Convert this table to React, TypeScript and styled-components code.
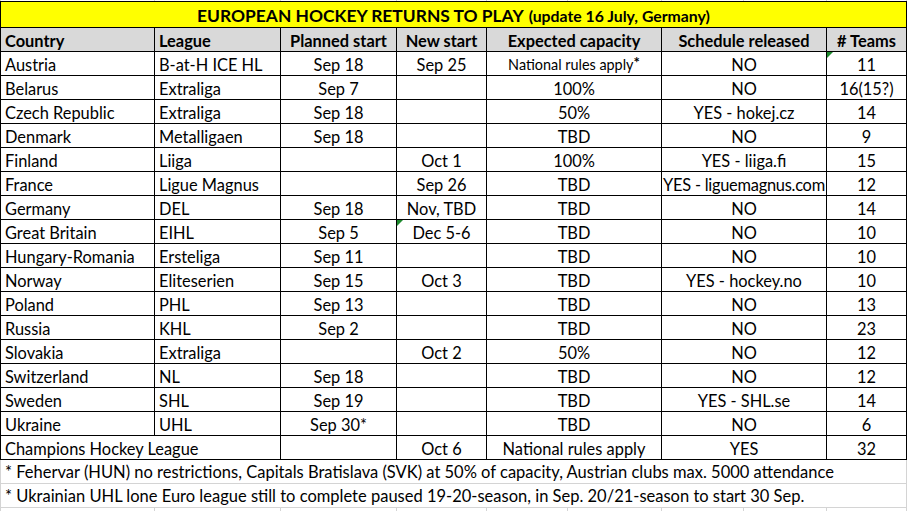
import React from 'react';
import styled, { createGlobalStyle, css } from 'styled-components';

const GlobalStyle = createGlobalStyle`
  html, body {
    margin: 0;
    padding: 0;
    background: #ffffff;
  }
  body {
    font-family: Lato, "Liberation Sans", sans-serif;
    color: #000000;
  }
`;

// excel column widths (A..I) for the faint gridline strips
const EXCEL_COLS = [154, 126, 116, 90, 81, 94, 82, 83, 80];

const Page = styled.div`
  width: 908px;
`;

const GridStrip = styled.div<{ $h: number }>`
  display: grid;
  grid-template-columns: ${EXCEL_COLS.map((w) => `${w}px`).join(' ')};
  height: ${(p) => p.$h}px;
  border-left: 1px solid #d4d4d4;
  width: fit-content;
`;

const GridCell = styled.div`
  border-right: 1px solid #d4d4d4;
`;

const Sheet = styled.div`
  display: grid;
  grid-template-columns: 154px 126px 116px 90px 175px 165px 80px;
  border-left: 1px solid #000;
  border-top: 1px solid #000;
  width: fit-content;
`;

const Cell = styled.div<{ $align?: 'left' | 'center'; $span?: number; $flag?: boolean; $tight?: boolean }>`
  position: relative;
  box-sizing: border-box;
  height: 24px;
  border-right: 1px solid #000;
  border-bottom: 1px solid #000;
  display: flex;
  align-items: center;
  justify-content: ${(p) => (p.$align === 'left' ? 'flex-start' : 'center')};
  padding: 1px 4px 0;
  font-size: 16.4px;
  white-space: nowrap;
  overflow: visible;
  ${(p) => p.$span && css`grid-column: span ${p.$span};`}
  ${(p) =>
    p.$tight &&
    css`
      padding: 1px 0 0;
      letter-spacing: -0.25px;
    `}
  ${(p) =>
    p.$flag &&
    css`
      &::before {
        content: '';
        position: absolute;
        left: 0;
        top: 0;
        border-top: 6px solid #1e8a2e;
        border-right: 6px solid transparent;
      }
    `}
`;

const TitleCell = styled(Cell)`
  grid-column: 1 / -1;
  height: 26px;
  background: #ffff00;
  font-weight: 700;
  gap: 5px;
  align-items: baseline;
  padding-top: 3px;
`;

const TitleMain = styled.span`
  font-size: 17.4px;
`;

const TitleSub = styled.span`
  font-size: 15.8px;
`;

const HeadCell = styled(Cell)`
  background: #d9d9d9;
  font-weight: 700;
`;

const SmallText = styled.span`
  font-size: 14.4px;
`;

const Star = styled.sup`
  font-size: 15px;
  font-weight: 700;
  line-height: 0;
  vertical-align: 2px;
`;

const NoteRow = styled.div`
  box-sizing: border-box;
  width: 907px;
  height: 24px;
  border-left: 1px solid #d4d4d4;
  border-right: 1px solid #d4d4d4;
  border-bottom: 1px solid #d4d4d4;
  display: flex;
  align-items: center;
  padding: 1px 4px 0;
  font-size: 16.5px;
  white-space: nowrap;
`;

type Row = {
  country: string;
  league: string;
  planned: string;
  next: string;
  capacity: React.ReactNode;
  schedule: string;
  teams: string;
  flagTeams?: boolean;
  flagNext?: boolean;
};

const rows: Row[] = [
  {
    country: 'Austria',
    league: 'B-at-H ICE HL',
    planned: 'Sep 18',
    next: 'Sep 25',
    capacity: (
      <SmallText>
        National rules apply<Star>*</Star>
      </SmallText>
    ),
    schedule: 'NO',
    teams: '11',
    flagTeams: true,
  },
  { country: 'Belarus', league: 'Extraliga', planned: 'Sep 7', next: '', capacity: '100%', schedule: 'NO', teams: '16(15?)' },
  { country: 'Czech Republic', league: 'Extraliga', planned: 'Sep 18', next: '', capacity: '50%', schedule: 'YES - hokej.cz', teams: '14' },
  { country: 'Denmark', league: 'Metalligaen', planned: 'Sep 18', next: '', capacity: 'TBD', schedule: 'NO', teams: '9' },
  { country: 'Finland', league: 'Liiga', planned: '', next: 'Oct 1', capacity: '100%', schedule: 'YES - liiga.fi', teams: '15' },
  { country: 'France', league: 'Ligue Magnus', planned: '', next: 'Sep 26', capacity: 'TBD', schedule: 'YES - liguemagnus.com', teams: '12' },
  { country: 'Germany', league: 'DEL', planned: 'Sep 18', next: 'Nov, TBD', capacity: 'TBD', schedule: 'NO', teams: '14' },
  { country: 'Great Britain', league: 'EIHL', planned: 'Sep 5', next: 'Dec 5-6', capacity: 'TBD', schedule: 'NO', teams: '10', flagNext: true },
  { country: 'Hungary-Romania', league: 'Ersteliga', planned: 'Sep 11', next: '', capacity: 'TBD', schedule: 'NO', teams: '10' },
  { country: 'Norway', league: 'Eliteserien', planned: 'Sep 15', next: 'Oct 3', capacity: 'TBD', schedule: 'YES - hockey.no', teams: '10' },
  { country: 'Poland', league: 'PHL', planned: 'Sep 13', next: '', capacity: 'TBD', schedule: 'NO', teams: '13' },
  { country: 'Russia', league: 'KHL', planned: 'Sep 2', next: '', capacity: 'TBD', schedule: 'NO', teams: '23' },
  { country: 'Slovakia', league: 'Extraliga', planned: '', next: 'Oct 2', capacity: '50%', schedule: 'NO', teams: '12' },
  { country: 'Switzerland', league: 'NL', planned: 'Sep 18', next: '', capacity: 'TBD', schedule: 'NO', teams: '12' },
  { country: 'Sweden', league: 'SHL', planned: 'Sep 19', next: '', capacity: 'TBD', schedule: 'YES - SHL.se', teams: '14' },
  { country: 'Ukraine', league: 'UHL', planned: 'Sep 30*', next: '', capacity: 'TBD', schedule: 'NO', teams: '6' },
];

const App = () => {
  return (
    <Page>
      <GlobalStyle />
      <GridStrip $h={1}>
        {EXCEL_COLS.map((_, i) => (
          <GridCell key={i} />
        ))}
      </GridStrip>
      <Sheet>
        <TitleCell>
          <TitleMain>EUROPEAN HOCKEY RETURNS TO PLAY</TitleMain>
          <TitleSub>(update 16 July, Germany)</TitleSub>
        </TitleCell>

        <HeadCell $align="left">Country</HeadCell>
        <HeadCell $align="left">League</HeadCell>
        <HeadCell>Planned start</HeadCell>
        <HeadCell>New start</HeadCell>
        <HeadCell>Expected capacity</HeadCell>
        <HeadCell>Schedule released</HeadCell>
        <HeadCell># Teams</HeadCell>

        {rows.map((r) => (
          <React.Fragment key={r.country}>
            <Cell $align="left">{r.country}</Cell>
            <Cell $align="left">{r.league}</Cell>
            <Cell>{r.planned}</Cell>
            <Cell $flag={r.flagNext}>{r.next}</Cell>
            <Cell>{r.capacity}</Cell>
            <Cell $tight={r.schedule.length > 18}>{r.schedule}</Cell>
            <Cell $flag={r.flagTeams}>{r.teams}</Cell>
          </React.Fragment>
        ))}

        <Cell $align="left" $span={2}>Champions Hockey League</Cell>
        <Cell />
        <Cell>Oct 6</Cell>
        <Cell>National rules apply</Cell>
        <Cell>YES</Cell>
        <Cell>32</Cell>
      </Sheet>

      <NoteRow>
        * Fehervar (HUN) no restrictions, Capitals Bratislava (SVK) at 50% of capacity, Austrian clubs max. 5000 attendance
      </NoteRow>
      <NoteRow>
        * Ukrainian UHL lone Euro league still to complete paused 19-20-season, in Sep. 20/21-season to start 30 Sep.
      </NoteRow>
      <GridStrip $h={6}>
        {EXCEL_COLS.map((_, i) => (
          <GridCell key={i} />
        ))}
      </GridStrip>
    </Page>
  );
};

export default App;
